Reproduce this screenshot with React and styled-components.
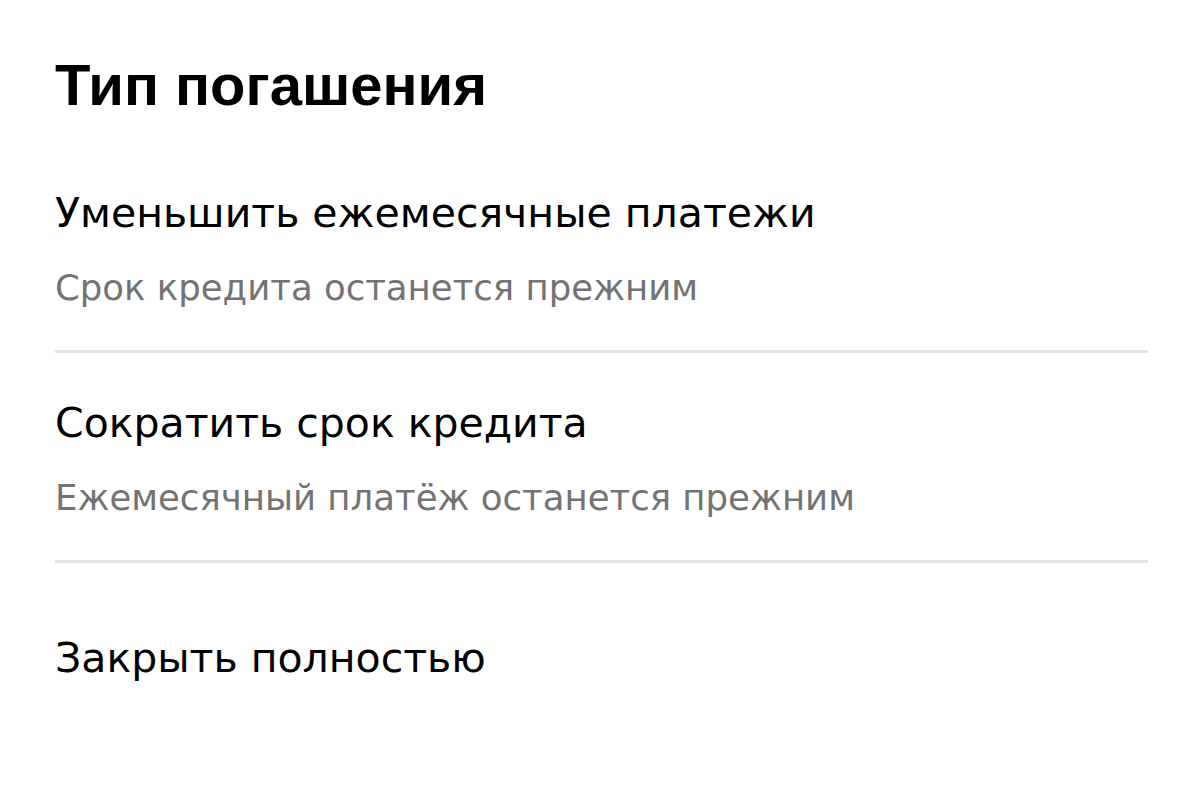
import React from 'react';
import styled, { createGlobalStyle } from 'styled-components';

const GlobalStyle = createGlobalStyle`
  body {
    margin: 0;
    background: #fff;
    font-family: "DejaVu Sans", sans-serif;
  }
`;

const Page = styled.div`
  padding: 50px 52px 0 55px;
`;

const Heading = styled.h1`
  margin: 0 0 66px;
  font-family: "Liberation Sans", Arial, sans-serif;
  font-weight: 700;
  font-size: 58px;
  line-height: 70px;
  color: #000;
`;

const Option = styled.div`
  padding: ${p => (p.last ? '68px 0 40px' : '43px 0 40px')};
  border-bottom: ${p => (p.last ? 'none' : '3px solid #e2e2e2')};
  &:first-of-type {
    padding-top: 0;
  }
`;

const OptionTitle = styled.div`
  font-size: 41px;
  line-height: 54px;
  color: #000;
`;

const OptionHint = styled.div`
  margin-top: 26px;
  font-size: 35.5px;
  line-height: 44px;
  color: #737373;
`;

const options = [
  { title: 'Уменьшить ежемесячные платежи', hint: 'Срок кредита останется прежним' },
  { title: 'Сократить срок кредита', hint: 'Ежемесячный платёж останется прежним' },
  { title: 'Закрыть полностью' },
];

const App = () => (
  <>
    <GlobalStyle />
    <Page>
      <Heading>Тип погашения</Heading>
      {options.map((o, i) => (
        <Option key={o.title} last={i === options.length - 1}>
          <OptionTitle>{o.title}</OptionTitle>
          {o.hint && <OptionHint>{o.hint}</OptionHint>}
        </Option>
      ))}
    </Page>
  </>
);

export default App;
